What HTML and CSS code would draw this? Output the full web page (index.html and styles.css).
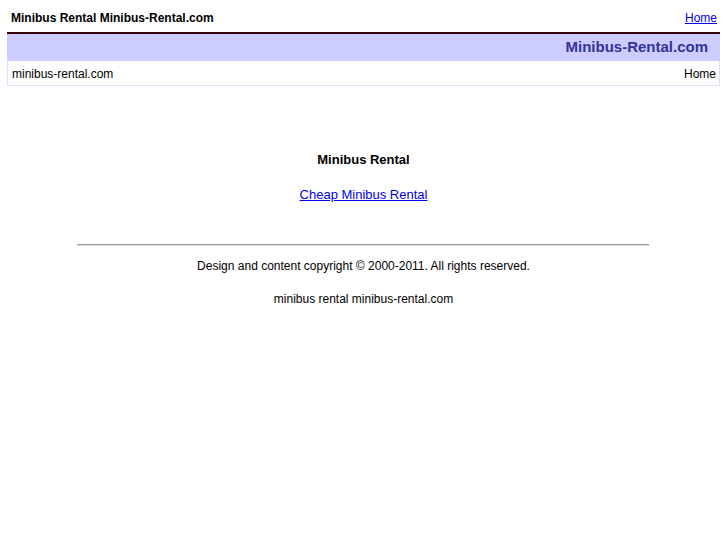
FILE: index.html
```html
<!DOCTYPE html>
<html>
<head>
<meta charset="utf-8">
<link rel="stylesheet" href="styles.css">
</head>
<body>
<div class="top">
  <h1 class="site-title">Minibus Rental Minibus-Rental.com</h1>
  <a class="top-link" href="#">Home</a>
</div>
<div class="band"><span class="band-title">Minibus-Rental.com</span></div>
<div class="crumbs">
  <span>minibus-rental.com</span>
  <span>Home</span>
</div>
<div class="main">
  <h2 class="heading">Minibus Rental</h2>
  <p class="link-line"><a href="#">Cheap Minibus Rental</a></p>
</div>
<hr class="rule">
<p class="foot">Design and content copyright © 2000-2011. All rights reserved.</p>
<p class="foot">minibus rental minibus-rental.com</p>
</body>
</html>
```
FILE: styles.css
```css
body {
  margin: 8px 7px;
  font-family: "Liberation Sans", Arial, sans-serif;
  font-size: 12px;
  color: #000;
  background: #fff;
}
a { color: #00e; }
.top {
  display: flex;
  justify-content: space-between;
  align-items: center;
  padding: 0 3px 0 4px;
  height: 20px;
}
.site-title {
  margin: 0;
  font-size: 12px;
  font-weight: bold;
}
.top-link { font-size: 12px; }
.band {
  margin-top: 4px;
  border-top: 2px solid #330000;
  background: #ccccff;
  box-sizing: border-box;
  height: 29px;
  display: flex;
  align-items: center;
  justify-content: flex-end;
  padding: 0 12px 2px 0;
}
.band-title {
  color: #333399;
  font-weight: bold;
  font-size: 15px;
}
.crumbs {
  display: flex;
  justify-content: space-between;
  align-items: center;
  border: 1px solid #ddddff;
  border-top: none;
  height: 25px;
  box-sizing: border-box;
  padding: 2px 3px 0 4px;
}
.main {
  text-align: center;
  padding-top: 66px;
}
.heading {
  margin: 0;
  font-size: 13px;
  font-weight: bold;
}
.link-line {
  margin: 20px 0 0;
  font-size: 13px;
}
.rule {
  width: 572px;
  margin: 42px auto 0 70px;
  border: none;
  border-top: 1px solid #999;
  border-bottom: 1px solid #ddd;
}
.foot {
  text-align: center;
  margin: 13px 0 0;
}
.foot + .foot { margin-top: 19px; }
```
